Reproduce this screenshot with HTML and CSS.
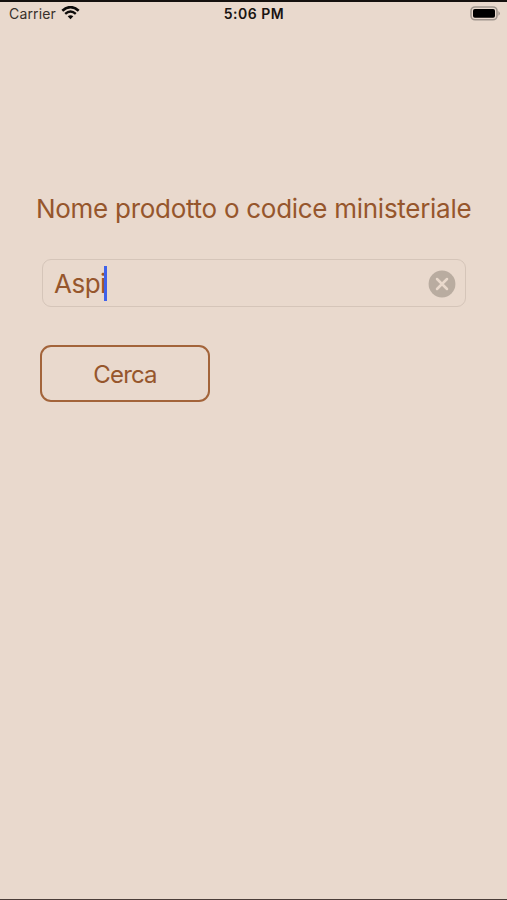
FILE: index.html
```html
<!DOCTYPE html>
<html lang="it">
<head>
<meta charset="utf-8">
<meta name="viewport" content="width=device-width, initial-scale=1">
<title>Cerca prodotto</title>
<link rel="stylesheet" href="styles.css">
</head>
<body>
<div class="screen">
  <header class="status">
    <div class="network">
      <span class="carrier">Carrier</span>
      <svg class="wifi" width="19" height="14" viewBox="0 0 18 14">
        <path d="M.8 4.8Q9-2.5 17.2 4.8" fill="none" stroke="#0d0b0a" stroke-width="2.6"/>
        <path d="M3.7 7.9Q9 3.2 14.3 7.9" fill="none" stroke="#0d0b0a" stroke-width="2.4"/>
        <path d="M6.2 10.3Q9 8 11.8 10.3L9 13.3Z" fill="#0d0b0a"/>
      </svg>
    </div>
    <span class="time">5:06 PM</span>
    <svg class="battery" width="31" height="16" viewBox="0 0 31 16">
      <rect x="1" y="1" width="26" height="12.8" rx="4" fill="none" stroke="#a0968e" stroke-width="1.6"/>
      <rect x="3" y="3" width="22" height="8.8" rx="1.8" fill="#000"/>
      <path d="M28.4 5Q31.4 7.4 28.4 9.8Z" fill="#a0968e"/>
    </svg>
  </header>
  <main class="search">
    <div class="label">Nome prodotto o codice ministeriale</div>
    <div class="field">
      <span class="value">Aspi</span><span class="caret"></span>
      <svg class="clear" width="28" height="28" viewBox="0 0 28 28">
        <circle cx="14" cy="14" r="13.4" fill="#b9aca0"/>
        <path d="M9 9L19 19M19 9L9 19" stroke="#e9d9cc" stroke-width="2.5" stroke-linecap="round"/>
      </svg>
    </div>
    <button class="button" type="button">Cerca</button>
  </main>
</div>
</body>
</html>
```
FILE: styles.css
```css
* { box-sizing: border-box; }
body {
  margin: 0;
  font-family: Inter, sans-serif;
  background: #e9d9cd;
}
.screen {
  height: 900px;
  border-top: 2px solid #15110f;
  border-bottom: 1px solid #4a3d38;
  color: #96562c;
}
.status {
  display: grid;
  grid-template-columns: 1fr auto 1fr;
  align-items: center;
  height: 24px;
  padding: 0 6px 0 9px;
  color: #181412;
  font-size: 14px;
  line-height: 24px;
}
.network { display: flex; align-items: center; gap: 5px; }
.carrier { color: #38302b; letter-spacing: 0.15px; }
.wifi { margin-top: -2px; }
.time { margin-left: -2px; font-weight: 600; font-size: 14px; letter-spacing: 0.5px; }
.battery { justify-self: end; margin-top: -1px; }
.search { padding: 165px 41px 0; }
.label {
  height: 36px;
  margin-left: -5px;
  font-size: 26px;
  line-height: 36px;
  letter-spacing: -0.28px;
  white-space: nowrap;
}
.field {
  display: flex;
  align-items: center;
  height: 48px;
  margin: 32px 0 0 1px;
  padding: 0 9px 0 11px;
  border: 1px solid #d5c5b9;
  border-radius: 9px;
  font-size: 26px;
}
.value { letter-spacing: -0.5px; }
.caret {
  width: 3px;
  height: 35px;
  margin-left: -2px;
  background: #3f62ea;
}
.clear { margin: 2px 0 0 auto; }
.button {
  display: block;
  width: 170px;
  height: 57px;
  margin: 38px 0 0 -1px;
  padding: 2px 0 0;
  border: 2px solid #a3643a;
  border-radius: 11px;
  background: transparent;
  color: #96562c;
  font: 24px Inter, sans-serif;
  letter-spacing: -0.8px;
}
```
